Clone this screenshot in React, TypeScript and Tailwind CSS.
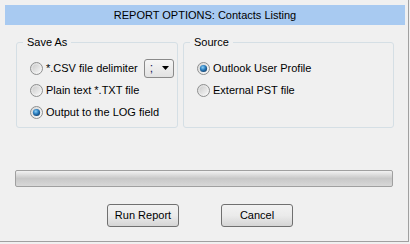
import React from "react";

function Radio({ checked }: { checked?: boolean }) {
  return (
    <svg width="13" height="13" viewBox="0 0 13 13" className="shrink-0">
      <defs>
        <linearGradient id="rOuter" x1="0" y1="0" x2="1" y2="1">
          <stop offset="0" stopColor="#d8d8d8" />
          <stop offset="1" stopColor="#fbfbfb" />
        </linearGradient>
        <linearGradient id="rInner" x1="0" y1="0" x2="1" y2="1">
          <stop offset="0" stopColor="#cdcdcd" />
          <stop offset="1" stopColor="#f4f4f4" />
        </linearGradient>
        <radialGradient id="rDot" cx="0.4" cy="0.35" r="0.7">
          <stop offset="0" stopColor="#8fd0f5" />
          <stop offset="0.5" stopColor="#2c7fc0" />
          <stop offset="1" stopColor="#123e6a" />
        </radialGradient>
      </defs>
      <circle cx="6.5" cy="6.5" r="6" fill="url(#rOuter)" stroke="#8e8f8f" strokeWidth="1" />
      <circle cx="6.5" cy="6.5" r="4" fill="url(#rInner)" />
      {checked && <circle cx="6.5" cy="6.5" r="3.6" fill="url(#rDot)" />}
    </svg>
  );
}

function Row({ checked, children }: { checked?: boolean; children: React.ReactNode }) {
  return (
    <div className="h-[22px] flex items-center">
      <Radio checked={checked} />
      <span className="ml-[3px]">{children}</span>
    </div>
  );
}

function Group({ title, className, children }: { title: string; className: string; children: React.ReactNode }) {
  return (
    <div className={`relative border border-[#d5dfe5] rounded-[3px] h-[86px] pt-[14px] pl-[13px] ${className}`}>
      <span className="absolute -top-[8px] left-[6px] px-[4px] bg-[#f0f0f0] leading-[15px]">{title}</span>
      {children}
    </div>
  );
}

export default function App() {
  return (
    <div
      className="w-[410px] h-[244px] bg-[#f0f0f0] text-black text-[11px]"
      style={{ fontFamily: "Tahoma, 'Liberation Sans', Arial, sans-serif" }}
    >
      <div className="w-[409px] h-[242px] border-r border-b border-[#a0a0a0] pt-[5px] pl-[5px] flex flex-col">
        <div className="w-[400px] h-[20px] bg-[#a8caf1] flex items-center justify-center">
          REPORT OPTIONS: Contacts Listing
        </div>
        <div className="flex gap-[5px] mt-[17px] ml-[11px]">
          <Group title="Save As" className="w-[162px]">
            <div className="h-[22px] flex items-center">
              <Radio />
              <span className="ml-[3px]">*.CSV file delimiter</span>
              <div className="ml-[6px] w-[30px] h-[19px] border border-[#8a8a8a] rounded-[3px] bg-gradient-to-b from-[#f6f6f6] to-[#e2e2e2] flex items-center pl-[5px]">
                <span className="text-[12px] text-[#10205a]">;</span>
                <svg width="7" height="4" viewBox="0 0 7 4" className="ml-[9px]">
                  <path d="M0 0H7L3.5 4Z" fill="#000" />
                </svg>
              </div>
            </div>
            <Row>Plain text *.TXT file</Row>
            <Row checked>Output to the LOG field</Row>
          </Group>
          <Group title="Source" className="w-[211px]">
            <Row checked>Outlook User Profile</Row>
            <Row>External PST file</Row>
          </Group>
        </div>
        <div className="ml-[10px] mt-[42px] w-[378px] h-[17px] border border-[#a0a0a0] rounded-[2px] bg-gradient-to-b from-[#f2f2f2] via-[#c8c8c8] to-[#d8d8d8]" />
        <div className="flex mt-[17px] ml-[102px] gap-[42px]">
          <button className="w-[72px] h-[23px] border border-[#707070] rounded-[3px] bg-gradient-to-b from-[#f2f2f2] via-[#ebebeb] to-[#d5d5d5] text-[11px] leading-none">
            Run Report
          </button>
          <button className="w-[72px] h-[23px] border border-[#707070] rounded-[3px] bg-gradient-to-b from-[#f2f2f2] via-[#ebebeb] to-[#d5d5d5] text-[11px] leading-none">
            Cancel
          </button>
        </div>
      </div>
    </div>
  );
}
